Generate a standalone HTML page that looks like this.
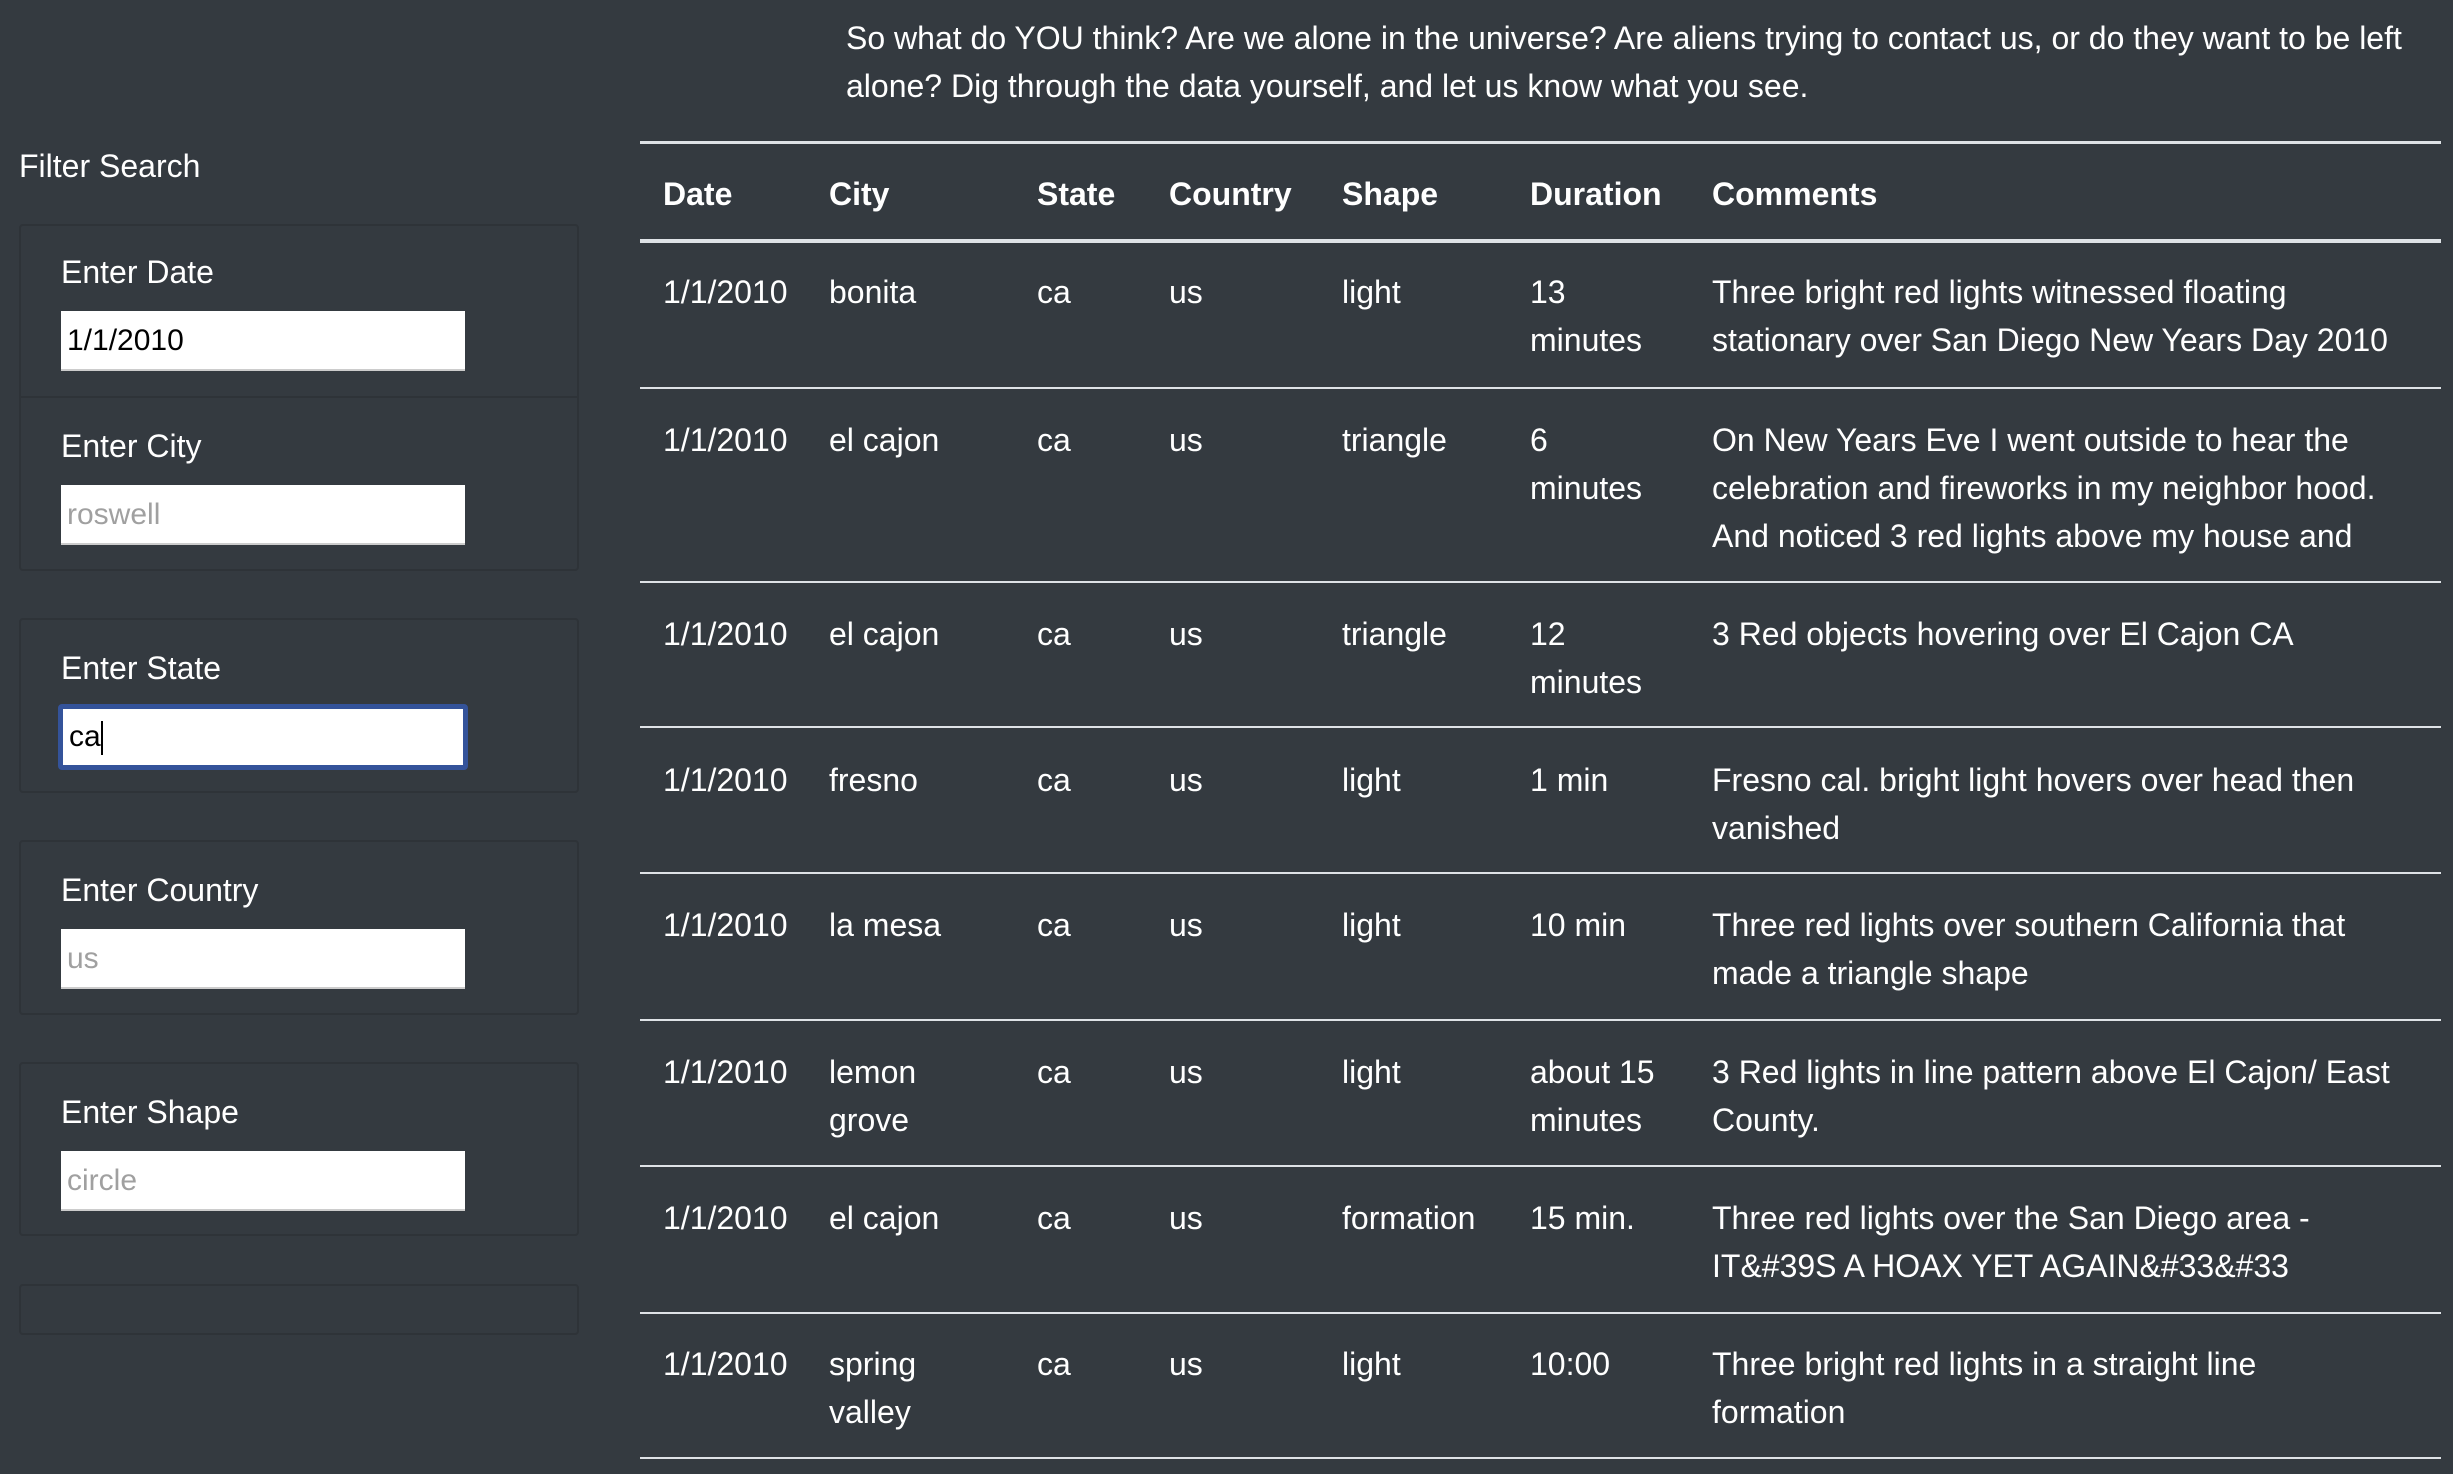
<!DOCTYPE html>
<html><head><meta charset="utf-8"><style>
*{margin:0;padding:0;box-sizing:border-box}
body{width:2453px;height:1474px;background:#343a40;color:#fff;font-family:"Liberation Sans",sans-serif;font-size:32px;overflow:hidden;position:relative}
.a{position:absolute;white-space:nowrap}
p.intro{position:absolute;left:846px;top:14px;line-height:48px;white-space:nowrap}
.box{position:absolute;left:19px;width:560px;border:2px solid #2e3338;border-radius:4px}
.lbl{position:absolute;left:61px;line-height:40px}
.inp{position:absolute;left:61px;width:404px;height:60px;background:#fff;color:#000;font-size:30px;line-height:60px;padding-left:6px;border-bottom:2px solid #ccc}
.ph{color:#a0a0a0}
.hl{position:absolute;left:640px;width:1801px;background:#dee2e6}
.c{position:absolute;line-height:48px;white-space:nowrap}
.b{font-weight:bold}
</style></head><body>
<p class="intro">So what do YOU think? Are we alone in the universe? Are aliens trying to contact us, or do they want to be left<br>alone? Dig through the data yourself, and let us know what you see.</p>

<div class="a" style="left:19px;top:146px;line-height:40px">Filter Search</div>
<div class="box" style="top:224px;height:347px"></div>
<div class="box" style="top:396px;height:2px;border:0;border-top:2px solid #2e3338;border-radius:0"></div>
<div class="lbl" style="top:252px">Enter Date</div>
<div class="inp" style="top:311px">1/1/2010</div>
<div class="lbl" style="top:426px">Enter City</div>
<div class="inp ph" style="top:485px">roswell</div>

<div class="box" style="top:618px;height:175px"></div>
<div class="lbl" style="top:648px">Enter State</div>
<div class="inp" style="top:704px;height:66px;border:5px solid #34539a;border-radius:4px;line-height:56px;left:58px;width:410px;padding-left:6px">ca<span style="display:inline-block;width:2px;height:34px;background:#000;vertical-align:middle"></span></div>

<div class="box" style="top:840px;height:175px"></div>
<div class="lbl" style="top:870px">Enter Country</div>
<div class="inp ph" style="top:929px">us</div>

<div class="box" style="top:1062px;height:174px"></div>
<div class="lbl" style="top:1092px">Enter Shape</div>
<div class="inp ph" style="top:1151px">circle</div>

<div class="box" style="top:1284px;height:51px"></div>

<div class="hl" style="top:141px;height:3px"></div>
<div class="hl" style="top:239px;height:4px"></div>
<div class="hl" style="top:387px;height:2px"></div>
<div class="hl" style="top:581px;height:2px"></div>
<div class="hl" style="top:726px;height:2px"></div>
<div class="hl" style="top:872px;height:2px"></div>
<div class="hl" style="top:1019px;height:2px"></div>
<div class="hl" style="top:1165px;height:2px"></div>
<div class="hl" style="top:1312px;height:2px"></div>
<div class="hl" style="top:1457px;height:2px"></div>

<div class="c b" style="left:663px;top:170px">Date</div>
<div class="c b" style="left:829px;top:170px">City</div>
<div class="c b" style="left:1037px;top:170px">State</div>
<div class="c b" style="left:1169px;top:170px">Country</div>
<div class="c b" style="left:1342px;top:170px">Shape</div>
<div class="c b" style="left:1530px;top:170px">Duration</div>
<div class="c b" style="left:1712px;top:170px">Comments</div>

<div class="c" style="left:663px;top:268px">1/1/2010</div>
<div class="c" style="left:829px;top:268px">bonita</div>
<div class="c" style="left:1037px;top:268px">ca</div>
<div class="c" style="left:1169px;top:268px">us</div>
<div class="c" style="left:1342px;top:268px">light</div>
<div class="c" style="left:1530px;top:268px">13<br>minutes</div>
<div class="c" style="left:1712px;top:268px">Three bright red lights witnessed floating<br>stationary over San Diego New Years Day 2010</div>

<div class="c" style="left:663px;top:416px">1/1/2010</div>
<div class="c" style="left:829px;top:416px">el cajon</div>
<div class="c" style="left:1037px;top:416px">ca</div>
<div class="c" style="left:1169px;top:416px">us</div>
<div class="c" style="left:1342px;top:416px">triangle</div>
<div class="c" style="left:1530px;top:416px">6<br>minutes</div>
<div class="c" style="left:1712px;top:416px">On New Years Eve I went outside to hear the<br>celebration and fireworks in my neighbor hood.<br>And noticed 3 red lights above my house and</div>

<div class="c" style="left:663px;top:610px">1/1/2010</div>
<div class="c" style="left:829px;top:610px">el cajon</div>
<div class="c" style="left:1037px;top:610px">ca</div>
<div class="c" style="left:1169px;top:610px">us</div>
<div class="c" style="left:1342px;top:610px">triangle</div>
<div class="c" style="left:1530px;top:610px">12<br>minutes</div>
<div class="c" style="left:1712px;top:610px">3 Red objects hovering over El Cajon CA</div>

<div class="c" style="left:663px;top:756px">1/1/2010</div>
<div class="c" style="left:829px;top:756px">fresno</div>
<div class="c" style="left:1037px;top:756px">ca</div>
<div class="c" style="left:1169px;top:756px">us</div>
<div class="c" style="left:1342px;top:756px">light</div>
<div class="c" style="left:1530px;top:756px">1 min</div>
<div class="c" style="left:1712px;top:756px">Fresno cal. bright light hovers over head then<br>vanished</div>

<div class="c" style="left:663px;top:901px">1/1/2010</div>
<div class="c" style="left:829px;top:901px">la mesa</div>
<div class="c" style="left:1037px;top:901px">ca</div>
<div class="c" style="left:1169px;top:901px">us</div>
<div class="c" style="left:1342px;top:901px">light</div>
<div class="c" style="left:1530px;top:901px">10 min</div>
<div class="c" style="left:1712px;top:901px">Three red lights over southern California that<br>made a triangle shape</div>

<div class="c" style="left:663px;top:1048px">1/1/2010</div>
<div class="c" style="left:829px;top:1048px">lemon<br>grove</div>
<div class="c" style="left:1037px;top:1048px">ca</div>
<div class="c" style="left:1169px;top:1048px">us</div>
<div class="c" style="left:1342px;top:1048px">light</div>
<div class="c" style="left:1530px;top:1048px">about 15<br>minutes</div>
<div class="c" style="left:1712px;top:1048px">3 Red lights in line pattern above El Cajon/ East<br>County.</div>

<div class="c" style="left:663px;top:1194px">1/1/2010</div>
<div class="c" style="left:829px;top:1194px">el cajon</div>
<div class="c" style="left:1037px;top:1194px">ca</div>
<div class="c" style="left:1169px;top:1194px">us</div>
<div class="c" style="left:1342px;top:1194px">formation</div>
<div class="c" style="left:1530px;top:1194px">15 min.</div>
<div class="c" style="left:1712px;top:1194px">Three red lights over the San Diego area -<br>IT&amp;#39S A HOAX YET AGAIN&amp;#33&amp;#33</div>

<div class="c" style="left:663px;top:1340px">1/1/2010</div>
<div class="c" style="left:829px;top:1340px">spring<br>valley</div>
<div class="c" style="left:1037px;top:1340px">ca</div>
<div class="c" style="left:1169px;top:1340px">us</div>
<div class="c" style="left:1342px;top:1340px">light</div>
<div class="c" style="left:1530px;top:1340px">10:00</div>
<div class="c" style="left:1712px;top:1340px">Three bright red lights in a straight line<br>formation</div>
</body></html>
